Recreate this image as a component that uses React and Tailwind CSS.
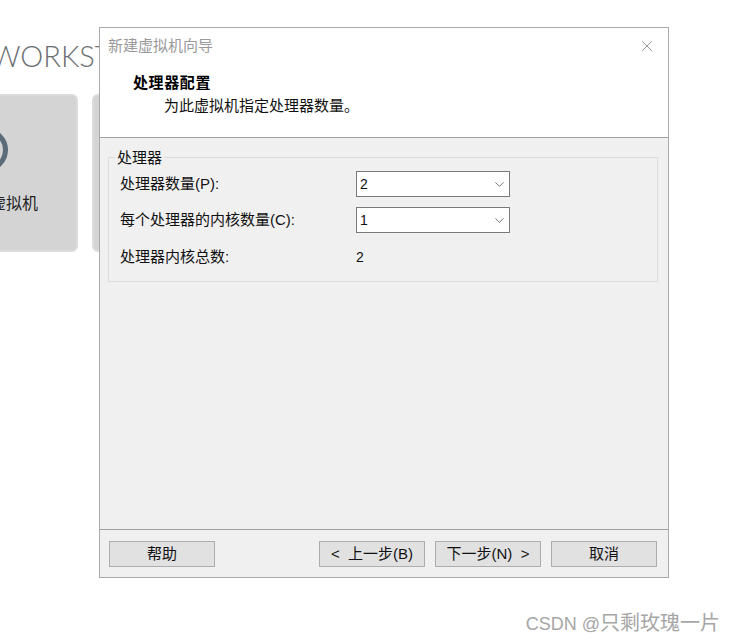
import React from 'react';
import { ChevronDown, X } from 'lucide-react';

const font = "font-['Liberation_Sans','Noto_Sans_CJK_SC',sans-serif]";

const Select = ({ value }) => (
  <div className="w-[154px] h-[26px] bg-white border border-[#7a7a7a] flex items-center justify-between pl-[3px] pr-[2px] text-[14px] text-[#111]">
    <span>{value}</span>
    <ChevronDown size={15} strokeWidth={1} className="text-[#222]" />
  </div>
);

const Row = ({ label, children, className = '' }) => (
  <div className={`flex items-center ${className}`}>
    <span className="w-[236px] text-[15px] text-[#111] whitespace-nowrap">{label}</span>
    {children}
  </div>
);

const Button = ({ children }) => (
  <button className="w-[106px] h-[26px] bg-[#e1e1e1] border border-[#adadad] text-[15px] text-[#111] whitespace-pre flex items-center justify-center">
    {children}
  </button>
);

export default function App() {
  return (
    <div className={`relative w-[735px] h-[642px] bg-white overflow-hidden ${font}`}>
      {/* Workstation home behind the wizard */}
      <div className="w-[200px] ml-[-9px] pt-[34px]">
        <div className="font-['Lato',sans-serif] font-light text-[29px] leading-[44px] text-[#6a6e72] whitespace-nowrap">
          WORKST
        </div>
        <div className="flex gap-[14px] mt-[16px] ml-[-73px]">
          <div className="w-[160px] h-[158px] shrink-0 bg-[#d4d4d4] border-2 border-[#dcdcdc] rounded-md flex flex-col items-center pt-[32px]">
            <div className="w-[44px] h-[44px] mr-[24px] rounded-full border-[5px] border-[#5b6b78]" />
            <div className="mt-[20px] text-[16px] leading-[24px] text-[#222] whitespace-nowrap">创建虚拟机</div>
          </div>
          <div className="w-[120px] h-[158px] shrink-0 bg-[#d4d4d4] border-2 border-[#dcdcdc] rounded-md" />
        </div>
      </div>

      {/* Wizard dialog */}
      <div className="absolute left-[99px] top-[27px] w-[570px] h-[551px] bg-[#f0f0f0] border border-[#a9a9a9] flex flex-col">
        <div className="h-[110px] shrink-0 bg-white border-b border-[#a0a0a0]">
          <div className="flex items-center justify-between h-[36px] pl-[8px] pr-[12px]">
            <span className="text-[15px] text-[#9a9a9a]">新建虚拟机向导</span>
            <X size={18} strokeWidth={1} className="text-[#777]" />
          </div>
          <div className="pl-[33px] mt-[9px] text-[15px] leading-[20px] font-bold tracking-[0.6px] text-black">处理器配置</div>
          <div className="pl-[64px] mt-[3px] text-[15px] leading-[20px] text-[#111]">为此虚拟机指定处理器数量。</div>
        </div>

        <div className="flex-1 pl-[8px] pr-[10px] pt-[19px]">
          <div className="relative h-[125px] border border-[#dcdcdc] pl-[11px] pt-[13px]">
            <span className="absolute left-[6px] top-[-9px] bg-[#f0f0f0] px-[2px] text-[15px] leading-[18px] text-[#111]">处理器</span>
            <Row label="处理器数量(P):"><Select value="2" /></Row>
            <Row label="每个处理器的内核数量(C):" className="mt-[10px]"><Select value="1" /></Row>
            <Row label="处理器内核总数:" className="mt-[14px] h-[20px]"><span className="text-[14px] text-[#111]">2</span></Row>
          </div>
        </div>

        <div className="h-[48px] shrink-0 border-t border-[#a0a0a0] flex items-start pt-[11px] pl-[9px] pr-[11px]">
          <Button>帮助</Button>
          <div className="ml-auto flex gap-[10px]">
            <Button>{'<  上一步(B)'}</Button>
            <Button>{'下一步(N)  >'}</Button>
            <Button>取消</Button>
          </div>
        </div>
      </div>

      {/* Watermark */}
      <div className="absolute right-[15px] top-[611px] text-[18px] leading-[24px] text-[#a6a6a6] whitespace-nowrap">
        CSDN @<span className="text-[20px]">只剩玫瑰一片</span>
      </div>
    </div>
  );
}
